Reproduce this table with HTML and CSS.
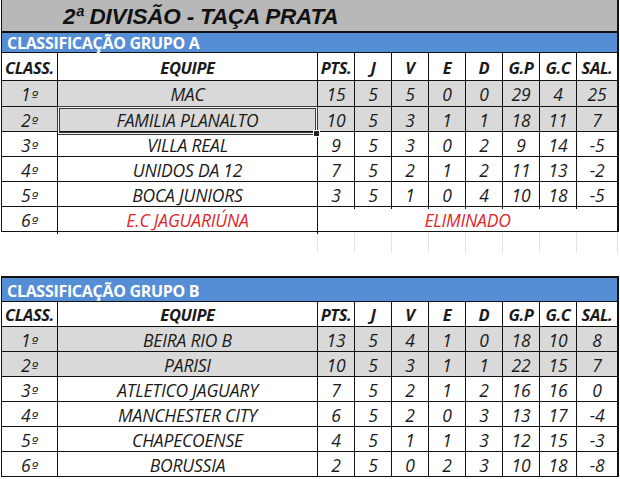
FILE: index.html
```html
<!DOCTYPE html>
<html lang="pt">
<head>
<meta charset="utf-8">
<title>2ª Divisão - Taça Prata</title>
<link rel="stylesheet" href="styles.css">
</head>
<body>
<div class="sheet">
  <div class="block">
    <div class="title">2ª DIVISÃO - TAÇA PRATA</div>
    <div class="group-title">CLASSIFICAÇÃO GRUPO A</div>
    <div class="row head tall">
      <div class="c">CLASS.</div><div class="c">EQUIPE</div><div class="c">PTS.</div><div class="c">J</div><div class="c">V</div><div class="c">E</div><div class="c">D</div><div class="c">G.P</div><div class="c">G.C</div><div class="c">SAL.</div>
    </div>
    <div class="row shade first">
      <div class="c">1<span class="ord">º</span></div><div class="c">MAC</div><div class="c">15</div><div class="c">5</div><div class="c">5</div><div class="c">0</div><div class="c">0</div><div class="c">29</div><div class="c">4</div><div class="c">25</div>
    </div>
    <div class="row shade">
      <div class="c">2<span class="ord">º</span></div><div class="c selected">FAMILIA PLANALTO</div><div class="c">10</div><div class="c">5</div><div class="c">3</div><div class="c">1</div><div class="c">1</div><div class="c">18</div><div class="c">11</div><div class="c">7</div>
    </div>
    <div class="row">
      <div class="c">3<span class="ord">º</span></div><div class="c">VILLA REAL</div><div class="c">9</div><div class="c">5</div><div class="c">3</div><div class="c">0</div><div class="c">2</div><div class="c">9</div><div class="c">14</div><div class="c">-5</div>
    </div>
    <div class="row">
      <div class="c">4<span class="ord">º</span></div><div class="c">UNIDOS DA 12</div><div class="c">7</div><div class="c">5</div><div class="c">2</div><div class="c">1</div><div class="c">2</div><div class="c">11</div><div class="c">13</div><div class="c">-2</div>
    </div>
    <div class="row">
      <div class="c">5<span class="ord">º</span></div><div class="c">BOCA JUNIORS</div><div class="c">3</div><div class="c">5</div><div class="c">1</div><div class="c">0</div><div class="c">4</div><div class="c">10</div><div class="c">18</div><div class="c">-5</div>
    </div>
    <div class="row">
      <div class="c">6<span class="ord">º</span></div><div class="c red">E.C JAGUARIÚNA</div><div class="c red span">ELIMINADO</div>
    </div>
  </div>

  <div class="gap">
    <div class="g"></div><div class="g"></div><div class="g"></div><div class="g"></div><div class="g"></div><div class="g"></div><div class="g"></div><div class="g"></div><div class="g"></div><div class="g"></div>
  </div>

  <div class="block group-b">
    <div class="group-title">CLASSIFICAÇÃO GRUPO B</div>
    <div class="row head">
      <div class="c">CLASS.</div><div class="c">EQUIPE</div><div class="c">PTS.</div><div class="c">J</div><div class="c">V</div><div class="c">E</div><div class="c">D</div><div class="c">G.P</div><div class="c">G.C</div><div class="c">SAL.</div>
    </div>
    <div class="row shade">
      <div class="c">1<span class="ord">º</span></div><div class="c">BEIRA RIO B</div><div class="c">13</div><div class="c">5</div><div class="c">4</div><div class="c">1</div><div class="c">0</div><div class="c">18</div><div class="c">10</div><div class="c">8</div>
    </div>
    <div class="row shade">
      <div class="c">2<span class="ord">º</span></div><div class="c">PARISI</div><div class="c">10</div><div class="c">5</div><div class="c">3</div><div class="c">1</div><div class="c">1</div><div class="c">22</div><div class="c">15</div><div class="c">7</div>
    </div>
    <div class="row">
      <div class="c">3<span class="ord">º</span></div><div class="c">ATLETICO JAGUARY</div><div class="c">7</div><div class="c">5</div><div class="c">2</div><div class="c">1</div><div class="c">2</div><div class="c">16</div><div class="c">16</div><div class="c">0</div>
    </div>
    <div class="row">
      <div class="c">4<span class="ord">º</span></div><div class="c">MANCHESTER CITY</div><div class="c">6</div><div class="c">5</div><div class="c">2</div><div class="c">0</div><div class="c">3</div><div class="c">13</div><div class="c">17</div><div class="c">-4</div>
    </div>
    <div class="row">
      <div class="c">5<span class="ord">º</span></div><div class="c">CHAPECOENSE</div><div class="c">4</div><div class="c">5</div><div class="c">1</div><div class="c">1</div><div class="c">3</div><div class="c">12</div><div class="c">15</div><div class="c">-3</div>
    </div>
    <div class="row">
      <div class="c">6<span class="ord">º</span></div><div class="c">BORUSSIA</div><div class="c">2</div><div class="c">5</div><div class="c">0</div><div class="c">2</div><div class="c">3</div><div class="c">10</div><div class="c">18</div><div class="c">-8</div>
    </div>
  </div>
</div>
</body>
</html>
```

FILE: styles.css
```css
* { box-sizing: border-box; }
html, body { margin: 0; padding: 0; background: #fff; }
body { font-family: "Open Sans", "Noto Sans", sans-serif; color: #1a1a1a; }

.sheet { margin-left: 1px; width: 618px; }

.block {
  border-left: 1px solid #111;
  border-right: 2px solid #111;
}
.group-b { border-top: 2px solid #111; border-left-width: 2px; }
.group-b .row, .group-b .group-title { margin-left: -1px; }

.title {
  height: 33px;
  background: #b8b8b8;
  border-bottom: 2px solid #111;
  font-family: "Liberation Sans", Arial, sans-serif;
  font-weight: bold;
  font-style: italic;
  font-size: 22.5px;
  letter-spacing: -0.2px;
  line-height: 31px;
  padding: 1px 0 0 61px;
  color: #111;
  white-space: nowrap;
}

.group-title {
  height: 20px;
  background: #558ed5;
  border-bottom: 1px solid #111;
  color: #fff;
  font-weight: bold;
  font-size: 16px;
  letter-spacing: -0.3px;
  line-height: 19px;
  padding: 1px 0 0 5px;
  white-space: nowrap;
}
.group-b .group-title { height: 24px; line-height: 22px; padding-top: 2px; }

.row {
  display: grid;
  grid-template-columns: 56px 260px 37px 37px 37px 37px 37px 37px 37px 40px;
  height: 25px;
  border-bottom: 1px solid #111;
  background: #fff;
}
.row.first { height: 26px; }
.row.tall { height: 28px; }
.row.shade { background: #d9d9d9; }

.c {
  position: relative;
  border-right: 1px solid #111;
  text-align: center;
  font-style: italic;
  font-size: 17.5px;
  letter-spacing: -0.2px;
  line-height: 24px;
  padding-top: 1px;
  white-space: nowrap;
}
.c:last-child { border-right: 0; }
.head .c { font-weight: bold; font-size: 16.5px; letter-spacing: -0.4px; }
.tall .c { line-height: 27px; padding-top: 1px; }
.first .c { line-height: 25px; }

.ord {
  font-family: "DejaVu Sans", sans-serif;
  font-size: 14px;
  margin-left: 1px;
}

.red { color: #e0262b; }
.span { grid-column: 3 / -1; }

.selected::after {
  content: "";
  position: absolute;
  left: -1px; top: -1px; right: -1px; bottom: -1px;
  border: 1px solid #3a3a3a;
  box-shadow: inset 0 0 0 1px #f2f2f2, inset 0 0 0 2px #3a3a3a;
}
.selected::before {
  content: "";
  position: absolute;
  right: -3px; bottom: -3px;
  width: 5px; height: 5px;
  background: #222;
  border: 1px solid #fff;
  z-index: 2;
}

.gap {
  height: 44px;
  padding-left: 1px;
  display: grid;
  grid-template-columns: 56px 260px 37px 37px 37px 37px 37px 37px 37px 41px;
  grid-template-rows: 21px;
}
.g { border-right: 1px solid #e4e4e4; }
.g:first-child { border-right-color: transparent; }
```
